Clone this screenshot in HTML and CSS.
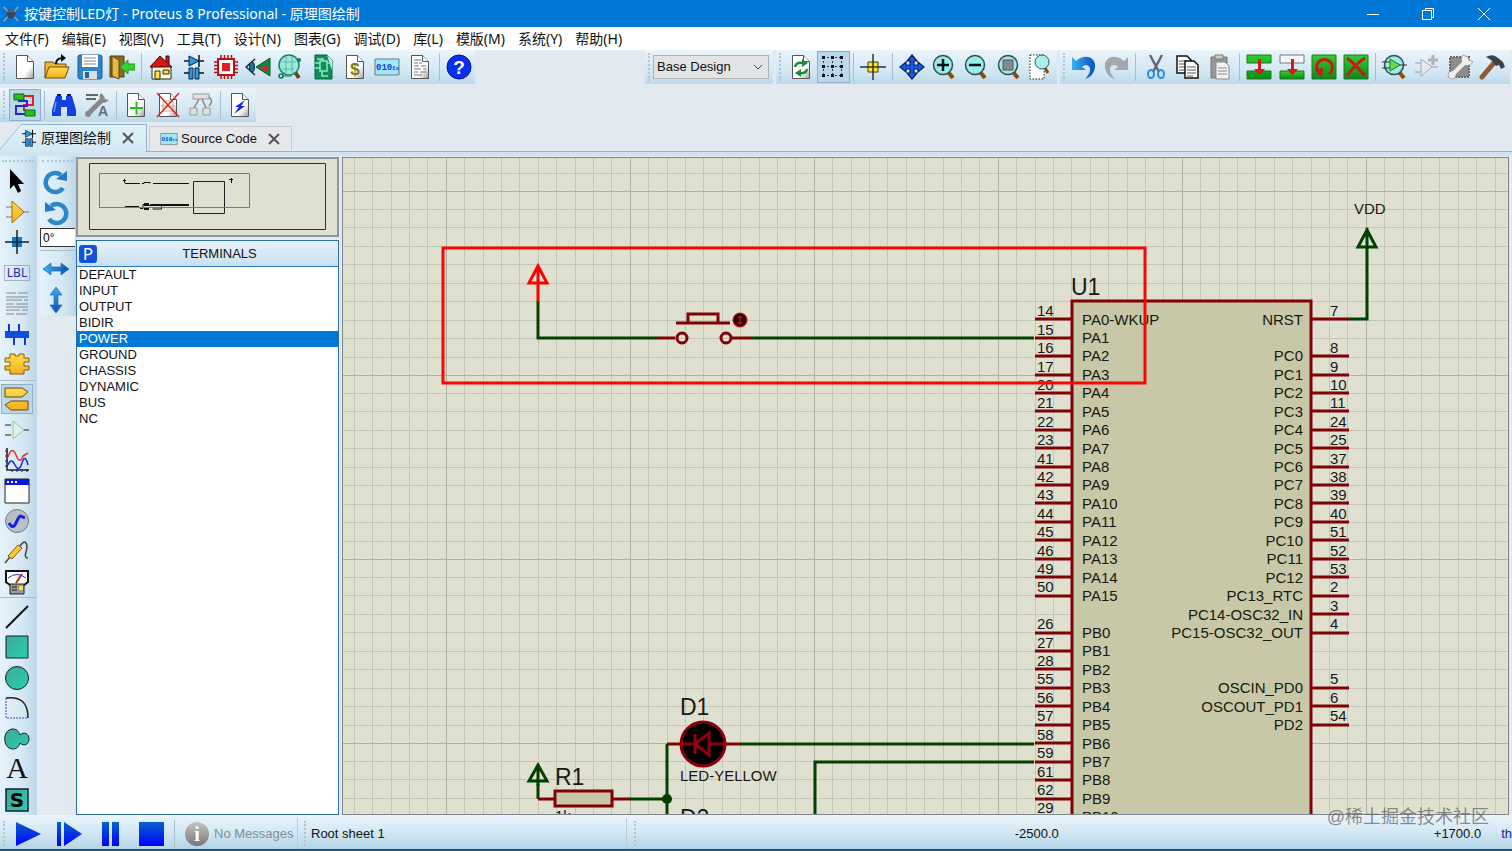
FILE: index.html
```html
<!DOCTYPE html>
<html lang="zh-CN">
<head>
<meta charset="utf-8">
<title>按键控制LED灯 - Proteus 8 Professional - 原理图绘制</title>
<link rel="stylesheet" href="styles.css">
</head>
<body>
<svg class="defs" aria-hidden="true">
  <defs>
    <linearGradient id="gPage" x1="0" y1="0" x2="1" y2="1"><stop offset=".65" stop-color="#fff"/><stop offset="1" stop-color="#999"/></linearGradient>
    <linearGradient id="gBlue" x1="0" y1="0" x2="0" y2="1"><stop offset="0" stop-color="#0a62c8"/><stop offset="1" stop-color="#0000ff"/></linearGradient>
    <linearGradient id="gUndo" x1="0" y1="0" x2="1" y2="0"><stop offset="0" stop-color="#3bb0f0"/><stop offset="1" stop-color="#0a4fc0"/></linearGradient>
    <linearGradient id="gGold" x1="0" y1="0" x2="0" y2="1"><stop offset="0" stop-color="#ffdc50"/><stop offset="1" stop-color="#f2ae20"/></linearGradient>
    <linearGradient id="gTeal" x1="0" y1="0" x2="1" y2="1"><stop offset="0" stop-color="#3fa896"/><stop offset="1" stop-color="#27d0b0"/></linearGradient>
    <linearGradient id="gGreen" x1="0" y1="0" x2="0" y2="1"><stop offset="0" stop-color="#2fd02f"/><stop offset="1" stop-color="#0a8a1a"/></linearGradient>
    <linearGradient id="gGray" x1="0" y1="0" x2="0" y2="1"><stop offset="0" stop-color="#c4c4c4"/><stop offset="1" stop-color="#777"/></linearGradient>
    <symbol id="page" viewBox="0 0 26 26"><path d="M4.500 1.500h11l6 6v17h-17z" fill="url(#gPage)" stroke="#555"/><path d="M15.500 1.500v6h6" fill="#fff" stroke="#555"/></symbol>
    <symbol id="schem" viewBox="0 0 26 26"><path d="M3 7h20M3 19h6M17 19h6M18 1v12M13 13v0" stroke="#111" stroke-width="1.500"/><path d="M8 2l10 5-10 5z" fill="#2a9be0" stroke="#102040"/><path d="M8 14h4v11H8zM14 14h4v11h-4z" fill="#2a9be0" stroke="#102040"/></symbol>
    <symbol id="code" viewBox="0 0 26 26"><path d="M1 5h24v16H1z" fill="#9fe8f8" stroke="#777"/><text x="2" y="16" class="glyph-code">010</text><text x="18" y="16" class="glyph-code-s">1s</text></symbol>
    <symbol id="lens" viewBox="0 0 26 26"><path d="M17 18l5 6" stroke="#8a4a10" stroke-width="4"/><circle cx="12" cy="11" r="9.500" fill="#98ecec" stroke="#3a4a50" stroke-width="1.500"/></symbol>
    <symbol id="lbl-x" viewBox="0 0 14 14"><path d="M2 2l10 10M12 2L2 12" stroke="#555" stroke-width="2"/></symbol>
    <symbol id="rot" viewBox="0 0 26 26"><path d="M20 19A9.500 9.500 0 1 1 18 6" fill="none" stroke="#2e88c8" stroke-width="4.500"/><path d="M24 2v10l-11-2z" fill="#2a78c0"/></symbol>
    <symbol id="arrows" viewBox="0 0 26 26"><path d="M0 13l8-6v4h10V7l8 6-8 6v-4H8v4z" fill="url(#gUndo)" stroke="#2468a8" stroke-width=".7"/></symbol>
  </defs>
</svg>

<header class="titlebar">
  <svg class="app-icon" viewBox="0 0 20 20" aria-hidden="true"><path d="M2 2l5 6M18 2l-5 6M2 18l5-6M18 18l-5-6" stroke="#a9a08c" stroke-width="1.500"/><circle cx="10" cy="10" r="5" fill="#354763"/><path d="M6 8q4-3 8 0" stroke="#c6653d" fill="none"/></svg>
  <h1>按键控制LED灯 - Proteus 8 Professional - 原理图绘制</h1>
  <button class="win" aria-label="最小化"><svg viewBox="0 0 14 14"><path d="M1 7.500h12" stroke="#fff"/></svg></button>
  <button class="win" aria-label="还原"><svg viewBox="0 0 14 14"><path d="M1.500 3.500h9v9h-9zM4.500 3V1.500h8v9H11" fill="none" stroke="#fff"/></svg></button>
  <button class="win" aria-label="关闭"><svg viewBox="0 0 14 14"><path d="M1 1l12 12M13 1L1 13" stroke="#fff"/></svg></button>
</header>

<nav class="menu">
  <button>文件(F)</button><button>编辑(E)</button><button>视图(V)</button><button>工具(T)</button><button>设计(N)</button><button>图表(G)</button><button>调试(D)</button><button>库(L)</button><button>模版(M)</button><button>系统(Y)</button><button>帮助(H)</button>
</nav>

<div class="bars">
  <div class="bar bar-file">
    <button aria-label="New"><svg viewBox="0 0 26 26"><use href="#page"/></svg></button>
    <button aria-label="Open"><svg viewBox="0 0 26 26"><path d="M1 24V8h8l2 2h11v4" fill="#f2b632" stroke="#6b4a00"/><path d="M1 24l4-11h20l-4 11z" fill="url(#gGold)" stroke="#6b4a00"/><path d="M12 10c0-5 3-6 7-6" fill="none" stroke="#111" stroke-width="2"/><path d="M17 0l5 4-5 4z" fill="#111"/></svg></button>
    <button aria-label="Save"><svg viewBox="0 0 26 26"><path d="M1 3q0-2 2-2h20q2 0 2 2v20q0 2-2 2H3q-2 0-2-2z" fill="#2c86c8" stroke="#1c5c94"/><path d="M5 1h16v12H5z" fill="#fff"/><path d="M7 4h12M7 7h12M7 10h12" stroke="#888"/><path d="M6 17h14v8H6z" fill="#ddd"/><path d="M8 18h4v6H8z" fill="#1b65a8"/></svg></button>
    <button aria-label="Close project"><svg viewBox="0 0 26 26"><path d="M1 2h14v21H1z" fill="#8a6a20" stroke="#5a4310"/><path d="M3 2l7 4v19l-7-3z" fill="#e9b840" stroke="#5a4310"/><path d="M11 13l8-7v4h7v6h-7v4z" fill="#35d135" stroke="#1c9c1c"/></svg></button>
    <span class="sep"></span>
    <button aria-label="Home"><svg viewBox="0 0 26 26"><path d="M18 2h3v8h-3z" fill="#d01818" stroke="#400"/><path d="M4 12h19v13H4z" fill="#ffffd8" stroke="#222"/><path d="M2 13L12 2l12 11z" fill="#d01818" stroke="#500"/><path d="M7 17h5v8H7z" fill="#ffe040" stroke="#222"/><path d="M15 16h6v4h-6z" fill="#ffe040" stroke="#222"/></svg></button>
    <button aria-label="Schematic Capture"><svg viewBox="0 0 26 26"><use href="#schem"/></svg></button>
    <button aria-label="PCB Layout"><svg viewBox="0 0 26 26"><path d="M8 1v24M11.500 1v24M15 1v24M18.500 1v24M1 8h24M1 11.500h24M1 15h24M1 18.500h24" stroke="#c01010" stroke-width="1.500"/><path d="M5 5h16v16H5z" fill="#fff" stroke="#c01010" stroke-width="2"/><path d="M9 9h8v8H9z" fill="#e02020"/></svg></button>
    <button aria-label="3D Visualizer"><svg viewBox="0 0 26 26"><path d="M10 5L1 13l9 8" fill="none" stroke="#222" stroke-width="1.500"/><ellipse cx="7" cy="13" rx="2.500" ry="5" fill="#1878a0" stroke="#123"/><path d="M11 13l14-9v18z" fill="#0f8840" stroke="#0a5a28"/><path d="M14 14l9-3v7z" fill="#d8232a"/></svg></button>
    <button aria-label="Gerber Viewer"><svg viewBox="0 0 26 26"><circle cx="4" cy="22" r="2" fill="none" stroke="#0c7b50" stroke-width="1.500"/><path d="M6 22h9" stroke="#0c7b50"/><path d="M18 18l4 6" stroke="#704010" stroke-width="4"/><circle cx="12" cy="11" r="10" fill="#9be8dc" stroke="#267a68" stroke-width="1.500"/><path d="M5 8h14M5 15h12M9 3v16M15 3v16" stroke="#58b8a8"/><circle cx="22" cy="6" r="2" fill="#0c7b50"/></svg></button>
    <button aria-label="Design Explorer"><svg viewBox="0 0 26 26"><path d="M5 1h12l5 5v19H5z" fill="#0e8f5c" stroke="#0a5c3c"/><path d="M17 1l5 5v10z" fill="#dfeee8"/><path d="M10 7h7v10h-7zM5 9h5M5 14h5M17 9h4M12 17v5h6M7 5h6v2" stroke="#8fe8c0" stroke-width="1.500" fill="none"/></svg></button>
    <button aria-label="Bill of Materials"><svg viewBox="0 0 26 26"><use href="#page"/><text x="13" y="21" class="glyph-dollar">$</text></svg></button>
    <button aria-label="Source Code"><svg viewBox="0 0 26 26"><use href="#code"/></svg></button>
    <button aria-label="Project Notes"><svg viewBox="0 0 26 26"><use href="#page"/><path d="M7 6h7M7 9h4M12 9h3M7 12h5M14 12h5M7 15h7M16 15h3M7 18h4M13 18h6M7 21h8" stroke="#777"/></svg></button>
    <span class="sep"></span>
    <button aria-label="Help"><svg viewBox="0 0 26 26"><circle cx="13" cy="13" r="12" fill="#0a2ff0" stroke="#0018a0"/><text x="13" y="20" class="glyph-help">?</text></svg></button>
  </div>

  <div class="bar bar-variant">
    <label class="variant"><select aria-label="Design variant"><option>Base Design</option></select><svg viewBox="0 0 10 10" aria-hidden="true"><path d="M1 3l4 4 4-4" fill="none" stroke="#444"/></svg></label>
  </div>

  <div class="bar bar-view">
    <button aria-label="Redraw"><svg viewBox="0 0 26 26"><use href="#page"/><path d="M7 13q1-5 8-4" fill="none" stroke="#1c8a38" stroke-width="2.500"/><path d="M14 5l6 4-6 4z" fill="#1c8a38"/><path d="M19 15q-1 5-7 4" fill="none" stroke="#1c8a38" stroke-width="2.500"/><path d="M13 15l-6 4 6 4z" fill="#1c8a38"/></svg></button>
    <button class="on" aria-label="Grid"><svg viewBox="0 0 26 26"><path d="M3 3.500h20M3 12.500h20M3 21.500h20M3.500 3v20M12.500 3v20M21.500 3v20" stroke="#334" stroke-dasharray="2 2"/><path d="M2 2h3v3H2zM11 2h3v3h-3zM20 2h3v3h-3zM2 11h3v3H2zM11 11h3v3h-3zM20 11h3v3h-3zM2 20h3v3H2zM11 20h3v3h-3zM20 20h3v3h-3z" fill="#112"/></svg></button>
    <span class="sep"></span>
    <button aria-label="Origin"><svg viewBox="0 0 26 26"><path d="M8 8h10v10H8z" fill="#ffe818" stroke="#443c00"/><path d="M0 13h26M13 0v26" stroke="#333" stroke-width="1.500"/></svg></button>
    <span class="sep"></span>
    <button aria-label="Pan"><svg viewBox="0 0 26 26"><path d="M13 1l5 6h-3v4h4V8l6 5-6 5v-3h-4v4h3l-5 6-5-6h3v-4H7v3l-6-5 6-5v3h4V7H8z" fill="#1858e8" stroke="#0a1c60" stroke-width="1.200"/></svg></button>
    <button aria-label="Zoom in"><svg viewBox="0 0 26 26"><use href="#lens"/><path d="M6 11h12M12 5v12" stroke="#111" stroke-width="2.500"/></svg></button>
    <button aria-label="Zoom out"><svg viewBox="0 0 26 26"><use href="#lens"/><path d="M6 11h12" stroke="#111" stroke-width="2.500"/></svg></button>
    <button aria-label="Zoom all"><svg viewBox="0 0 26 26"><use href="#lens"/><path d="M7 6h10v10H7z" fill="#888" stroke="#555"/></svg></button>
    <button aria-label="Zoom area"><svg viewBox="0 0 26 26"><path d="M2 1h14v24H2z" fill="#fff" stroke="#222" stroke-dasharray="1.500 1.500"/><path d="M17 14l3 5" stroke="#8a4a10" stroke-width="3"/><circle cx="14" cy="8" r="7" fill="#a8f0ec" stroke="#3a5a60"/></svg></button>
  </div>

  <div class="bar bar-edit">
    <button aria-label="Undo"><svg viewBox="0 0 26 26"><path d="M1 3l4 4c9-8 20-4 19 6-1 8-6 11-10 12 6-6 7-13 1-14-2 0-3 1-4 2l4 3H1z" fill="url(#gUndo)"/></svg></button>
    <button aria-label="Redo"><svg viewBox="0 0 26 26"><path d="M25 3l-4 4C12-1 1 3 2 13c1 8 6 11 10 12-6-6-7-13-1-14 2 0 3 1 4 2l-4 3h14z" fill="#a4a8ac"/></svg></button>
    <span class="sep"></span>
    <button aria-label="Cut"><svg viewBox="0 0 26 26"><path d="M7 1l9 17M19 1l-9 17" stroke="#667" stroke-width="2.500"/><ellipse cx="8" cy="20" rx="3" ry="4" fill="none" stroke="#2a8be0" stroke-width="2"/><ellipse cx="18" cy="20" rx="3" ry="4" fill="none" stroke="#2a8be0" stroke-width="2"/></svg></button>
    <button aria-label="Copy"><svg viewBox="0 0 26 26"><path d="M2 2h10l4 4v13H2z" fill="#fff" stroke="#111" stroke-width="1.500"/><path d="M4 7h8M4 10h8M4 13h8M4 16h6" stroke="#555"/><path d="M10 7h9l4 4v13H10z" fill="#fff" stroke="#111" stroke-width="1.500"/><path d="M12 13h9M12 16h9M12 19h9M12 22h6" stroke="#555"/></svg></button>
    <button aria-label="Paste"><svg viewBox="0 0 26 26"><path d="M4 3h16v21H4z" fill="#999" stroke="#777"/><path d="M8 1h8v4H8z" fill="#ccc" stroke="#777"/><path d="M9 8h9l4 4v13H9z" fill="#f2f2f2" stroke="#888"/><path d="M11 14h9M11 17h9M11 20h9" stroke="#888"/></svg></button>
    <span class="sep"></span>
    <button aria-label="Block copy"><svg viewBox="0 0 26 26"><path d="M1 1h24v8H1zM1 17h24v8H1z" fill="url(#gGreen)" stroke="#197819"/><path d="M12 5h3v10h4l-5.500 6L8 15h4z" fill="#d81818"/></svg></button>
    <button aria-label="Block move"><svg viewBox="0 0 26 26"><path d="M1 1h24v8H1z" fill="#eef6fb" stroke="#777"/><path d="M1 17h24v8H1z" fill="url(#gGreen)" stroke="#197819"/><path d="M12 5h3v10h4l-5.500 6L8 15h4z" fill="#d81818"/></svg></button>
    <button aria-label="Block rotate"><svg viewBox="0 0 26 26"><path d="M1 1h24v24H1z" fill="url(#gGreen)" stroke="#197819"/><path d="M9 20A8 8 0 1 1 18 20" fill="none" stroke="#c81818" stroke-width="3"/><path d="M3 15l9-1-1 9z" fill="#c81818"/></svg></button>
    <button aria-label="Block delete"><svg viewBox="0 0 26 26"><path d="M1 1h24v24H1z" fill="url(#gGreen)" stroke="#197819"/><path d="M4 4q8 6 18 18M22 4Q12 10 4 22" fill="none" stroke="#c81818" stroke-width="3"/></svg></button>
    <span class="sep"></span>
    <button aria-label="Pick parts"><svg viewBox="0 0 26 26"><use href="#lens"/><path d="M0 8h8M0 14h8M17 11h8" stroke="#333"/><path d="M8 5l10 6-10 6z" fill="#6ed848" stroke="#277a20"/></svg></button>
    <button aria-label="Make device"><svg viewBox="0 0 26 26"><path d="M1 9h6M1 18h6M17 13h7" stroke="#999"/><path d="M7 5l11 8-11 9z" fill="#e4e8ea" stroke="#a8acb0"/><path d="M19 1v10M14 6h10" stroke="#b0b4b8" stroke-width="3"/></svg></button>
    <button aria-label="Packaging tool"><svg viewBox="0 0 26 26"><path d="M3 3h19v20H3z" fill="#8c8c8c" stroke="#666" stroke-width="2" stroke-dasharray="2 1"/><path d="M5 21L18 8" stroke="#888" stroke-width="6"/><path d="M16 1q-4 5 1 9t9-2l-4-2-1-3z" fill="#eee" stroke="#888" stroke-width=".7"/><circle cx="5" cy="21" r="4" fill="#eee" stroke="#888" stroke-width=".7"/><path d="M5 21L18 8" stroke="#eee" stroke-width="4.500"/></svg></button>
    <button aria-label="Decompose"><svg viewBox="0 0 26 26"><path d="M3 23L14 10" stroke="#8b5a35" stroke-width="5" stroke-linecap="round"/><path d="M7 3q7-4 12 1l5 4 2 5-4 2-2-4-3 1-5-6z" fill="#3c4248"/></svg></button>
  </div>
</div>

<div class="bars bars-second">
  <div class="bar bar-wire">
    <button class="on" aria-label="Wire autorouter"><svg viewBox="0 0 26 26"><path d="M12 4h9v9h-9v5h2" fill="none" stroke="#e02020" stroke-width="2"/><path d="M14 22H4v-8h11V9H7V7" fill="none" stroke="#2028e0" stroke-width="2"/><path d="M2 2h10v6H2zM13 18h10v6H13z" fill="#22c022" stroke="#0a6a0a"/></svg></button>
    <span class="sep"></span>
    <button aria-label="Search and tag"><svg viewBox="0 0 26 26"><path d="M5 4h6v4h4V4h6l4 14v6h-9v-9h-6v9H1v-6z" fill="#1440e0"/><path d="M6 3h4M16 3h4" stroke="#0a1c80" stroke-width="2"/><path d="M5 10L3 20" stroke="#5a9af8" stroke-width="1.500"/></svg></button>
    <button aria-label="Property assignment"><svg viewBox="0 0 26 26"><path d="M2 3h12M2 7h10" stroke="#666" stroke-width="2"/><path d="M4 22L19 7" stroke="#888" stroke-width="5"/><path d="M17 1q-3 4 0 8t8-1l-4-1-1-3z" fill="#888"/><circle cx="4" cy="22" r="3" fill="#888"/><text x="14" y="24" class="glyph-a">A</text></svg></button>
    <span class="sep"></span>
    <button aria-label="New sheet"><svg viewBox="0 0 26 26"><use href="#page"/><path d="M7 16h13M13.500 9.500v13" stroke="#20c020" stroke-width="2"/></svg></button>
    <button aria-label="Remove sheet"><svg viewBox="0 0 26 26"><use href="#page"/><path d="M8 9h10v10H8zM6 14h14" fill="none" stroke="#c9a27f"/><path d="M2 1l22 24M24 1L2 25" stroke="#e02020" stroke-width="1.500"/></svg></button>
    <button aria-label="Exit to parent"><svg viewBox="0 0 26 26"><path d="M5 2h16v5H5zM2 16h7v7H2zM15 16h7v7h-7z" fill="#e0e0e0" stroke="#999"/><path d="M6 16l5-9M18 16l-4-9M21 5q5 4 0 9" fill="none" stroke="#888" stroke-width="1.500"/></svg></button>
    <span class="sep"></span>
    <button aria-label="Electrical check"><svg viewBox="0 0 26 26"><use href="#page"/><path d="M18 8l-10 7h4l-5 7 11-8h-4z" fill="#1020f0"/></svg></button>
  </div>
</div>

<div class="tabs">
  <div class="tab tab-active"><button class="tab-label"><svg viewBox="0 0 26 26" aria-hidden="true"><use href="#schem"/></svg>原理图绘制</button><button class="tab-x" aria-label="关闭原理图绘制"><svg viewBox="0 0 14 14"><use href="#lbl-x"/></svg></button></div>
  <div class="tab"><button class="tab-label"><svg viewBox="0 0 26 26" aria-hidden="true"><use href="#code"/></svg>Source Code</button><button class="tab-x" aria-label="关闭Source Code"><svg viewBox="0 0 14 14"><use href="#lbl-x"/></svg></button></div>
</div>

<main class="work">
  <div class="modes">
    <button aria-label="Selection"><svg viewBox="0 0 26 26"><path d="M6 1v20l4-4 4 8 3-2-3-7h6z" fill="#000"/></svg></button>
    <button aria-label="Component"><svg viewBox="0 0 26 26"><path d="M2 8h7M2 18h7M19 13h6" stroke="#777"/><path d="M8 2l12 11L8 24z" fill="url(#gGold)" stroke="#a06c00"/></svg></button>
    <button aria-label="Junction"><svg viewBox="0 0 26 26"><path d="M8 8h10v10H8z" fill="#1a78c8"/><path d="M1 13h24M13 1v24" stroke="#123" stroke-width="1.500"/></svg></button>
    <button aria-label="Wire label"><svg viewBox="0 0 26 26"><path d="M.5 5.500h25v15H.5z" fill="none" stroke="#778" stroke-dasharray="1 1"/><text x="13" y="17" class="glyph-lbl">LBL</text></svg></button>
    <button aria-label="Text script"><svg viewBox="0 0 26 26"><path d="M2 3h10M14 3h10M2 7h22M2 10h16M20 10h4M2 14h8M12 14h12M2 17h22M2 20h14M18 20h6M2 24h8M12 24h11" stroke="#888"/></svg></button>
    <button aria-label="Bus"><svg viewBox="0 0 26 26"><path d="M1 10h24v7H1z" fill="#1050e0"/><path d="M5 3v8M15 3v8M10 16v8M21 16v8" stroke="#1438d0" stroke-width="2"/></svg></button>
    <button aria-label="Subcircuit"><svg viewBox="0 0 26 26"><path d="M6 3h5v2h4V3h5v4h5v4h-5v4h5v4h-5v4H6v-4H1v-4h5v-4H1V7h5z" fill="url(#gGold)" stroke="#8a5c00"/></svg></button>
    <span class="sep"></span>
    <button class="on" aria-label="Terminals"><svg viewBox="0 0 26 26"><path d="M1 2h17l6 4-6 5H1zM24 15H7l-6 4 6 5h17z" fill="url(#gGold)" stroke="#6a4a00"/></svg></button>
    <button aria-label="Device pins"><svg viewBox="0 0 26 26"><path d="M1 8h6M1 18h6M20 13h5" stroke="#222"/><path d="M9 4l11 9-11 9z" fill="#def0e8" stroke="#8aca98"/></svg></button>
    <button aria-label="Graph"><svg viewBox="0 0 26 26"><path d="M3 1v22h22" fill="none" stroke="#222" stroke-width="1.500"/><path d="M1 4h3M1 9h3M1 14h3M1 19h3M8 22v3M13 22v3M18 22v3M23 22v3" stroke="#222"/><path d="M4 10q4-12 8-2t7 1l5-3" fill="none" stroke="#e03030" stroke-width="1.500"/><path d="M4 18q3-8 7 0t7-2 6 2" fill="none" stroke="#1828e0" stroke-width="1.500"/></svg></button>
    <button aria-label="Active popup"><svg viewBox="0 0 26 26"><path d="M1 1h24v24H1z" fill="#fff" stroke="#222"/><path d="M1 1h24v6H1z" fill="#0818d8"/><path d="M3 3h2v2H3zM7 3h2v2H7zM11 3h2v2h-2z" fill="#fff"/></svg></button>
    <button aria-label="Generator"><svg viewBox="0 0 26 26"><circle cx="13" cy="13" r="11.500" fill="#b8c0c8" stroke="#777"/><path d="M5 15q4 7 7 0t4-7 5 2" fill="none" stroke="#1020e8" stroke-width="3"/></svg></button>
    <button aria-label="Probe"><svg viewBox="0 0 26 26"><path d="M1 24l5-6" stroke="#444" stroke-width="1.500"/><path d="M4 17L14 6l4 3L8 20z" fill="#f8c838" stroke="#7a5a10"/><path d="M16 7q4-6 6-3t0 9 2 6" fill="none" stroke="#444" stroke-width="1.500"/></svg></button>
    <button aria-label="Instruments"><svg viewBox="0 0 26 26"><path d="M2 2h22v11l-4 3H6l-4-3z" fill="#fff" stroke="#111" stroke-width="2"/><path d="M4 9q9-7 18 0" fill="none" stroke="#2030d0"/><path d="M12 14l6-9" stroke="#d02020" stroke-width="2"/><path d="M6 15h14v10H6z" fill="#999" stroke="#222"/><path d="M15 17h4v4h-4z" fill="#ffe040"/><path d="M8 18h5M8 21h5" stroke="#222"/></svg></button>
    <span class="sep"></span>
    <button aria-label="Line"><svg viewBox="0 0 26 26"><path d="M2 24L24 2" stroke="#111" stroke-width="2"/></svg></button>
    <button aria-label="Box"><svg viewBox="0 0 26 26"><path d="M2 2h22v22H2z" fill="url(#gTeal)" stroke="#123"/></svg></button>
    <button aria-label="Circle"><svg viewBox="0 0 26 26"><circle cx="13" cy="13" r="11.500" fill="url(#gTeal)" stroke="#123"/></svg></button>
    <button aria-label="Arc"><svg viewBox="0 0 26 26"><path d="M2 3v20h22" fill="none" stroke="#4848c8" stroke-dasharray="2 1"/><path d="M2 3q22-3 22 20" fill="none" stroke="#222" stroke-width="1.500"/></svg></button>
    <button aria-label="Path"><svg viewBox="0 0 26 26"><path d="M9 3c5 0 6 4 7 6 4-4 9-1 9 4s-5 8-9 4c-1 3-3 6-7 6-11 0-11-20 0-20z" fill="url(#gTeal)" stroke="#123"/></svg></button>
    <button aria-label="Text"><svg viewBox="0 0 26 26"><text x="13" y="22" class="glyph-text">A</text></svg></button>
    <button aria-label="Symbol"><svg viewBox="0 0 26 26"><path d="M2 2h22v22H2z" fill="url(#gTeal)" stroke="#123" stroke-width="1.500"/><text x="13" y="20" class="glyph-s">S</text></svg></button>
  </div>

  <div class="orient">
    <button aria-label="Rotate clockwise"><svg viewBox="0 0 26 26"><use href="#rot"/></svg></button>
    <button aria-label="Rotate anti-clockwise"><svg viewBox="0 0 26 26"><g transform="matrix(-1 0 0 1 26 0)"><use href="#rot"/></g></svg></button>
    <input type="text" value="0°" aria-label="Rotation angle">
    <span class="sep"></span>
    <button aria-label="Mirror horizontally"><svg viewBox="0 0 26 26"><use href="#arrows"/></svg></button>
    <button aria-label="Mirror vertically"><svg viewBox="0 0 26 26"><g transform="rotate(90 13 13)"><use href="#arrows"/></g></svg></button>
  </div>

  <aside class="side">
    <div class="overview">
      <svg viewBox="0 0 259 76" aria-label="Sheet overview">
        <path d="M11.500 4.500h236v66h-236z" fill="none" stroke="#2a1ca8"/>
        <path d="M115.500 22.500h31v32h-31z" fill="none" stroke="#222"/>
        <path d="M47 24.500h15M64 24.500h2v-1h6v1M75 24.500h36M46.500 20v4M45 21.500h3M47 47.500h14M62 49.500h3v-4h6M71 46.500h40M83.500 46v4h-9M153.500 19v5M151 20.500h4" fill="none" stroke="#111"/>
        <path d="M66 44h5v3h-5zM66 49h5v2h-5zM72 45h39v2H72z" fill="#111"/>
        <path d="M21.500 14.500h150v34h-150z" fill="none" stroke="#28b428"/>
      </svg>
    </div>
    <section class="picker">
      <header><button class="pick" aria-label="Pick">P</button><h2>TERMINALS</h2></header>
      <ul>
        <li><button>DEFAULT</button></li><li><button>INPUT</button></li><li><button>OUTPUT</button></li><li><button>BIDIR</button></li><li><button class="sel">POWER</button></li><li><button>GROUND</button></li><li><button>CHASSIS</button></li><li><button>DYNAMIC</button></li><li><button>BUS</button></li><li><button>NC</button></li>
      </ul>
    </section>
  </aside>

  <div class="sheet">
    <svg class="drawing" aria-label="Schematic">
      <defs>
        <pattern id="grid" patternUnits="userSpaceOnUse" x="446" y="191" width="184" height="184">
          <path class="g-minor" d="M18.500 0v184M37.500 0v184M55.500 0v184M73.500 0v184M92.500 0v184M110.500 0v184M129.500 0v184M147.500 0v184M165.500 0v184M0 18.500h184M0 36.500h184M0 55.500h184M0 73.500h184M0 92.500h184M0 110.500h184M0 129.500h184M0 147.500h184M0 166.500h184"/>
          <path class="g-major" d="M.5 0v184M0 .5h184"/>
        </pattern>
      </defs>
      <g transform="translate(-343 -158)">
        <rect x="343" y="158" width="4000" height="3000" fill="url(#grid)"/>
        <path class="wire" d="M538 301v37h120M751 338h283M1349 319h18v-70M742 744h292M815 1000V762h219M667 1000V744M667 799h-37M538 799v-15"/>
        <path class="wire" d="M1367 228v21M1367 230l-9 17h18zM538 764v22M538 765l-9 16h18z"/>
        <circle cx="667" cy="799" r="5" fill="#004000"/>
        <path class="live" d="M538 266v36M538 266l-9 17h18z"/>
        <path class="part" d="M658 338h17M732 338h19M676 323h54M688 323v-9h30v9"/>
        <circle class="part" cx="682" cy="338" r="5"/><circle class="part" cx="726" cy="338" r="5"/>
        <circle cx="740" cy="320" r="7" fill="#300" stroke="#e00000"/><path d="M740 316v8M738 318l2-2 2 2M738 322l2 2 2-2" fill="none" stroke="#f02020"/>
        <path class="part" d="M667 744h14M727 744h15M538 799h17M612 799h18"/>
        <circle cx="703" cy="744" r="22" fill="#000" stroke="#8c0008" stroke-width="3"/>
        <path class="led" d="M681 744h14M709 744h18M695 734v20M695 744l14-11v22z"/>
        <rect class="part body" x="555" y="791" width="57" height="15"/>
        <rect class="part body" x="1072" y="301" width="239" height="900"/>
        <path class="part" d="M1035 319h37M1035 338h37M1035 356h37M1035 375h37M1035 393h37M1035 411h37M1035 430h37M1035 448h37M1035 467h37M1035 485h37M1035 503h37M1035 522h37M1035 540h37M1035 559h37M1035 577h37M1035 596h37M1035 633h37M1035 651h37M1035 669h37M1035 688h37M1035 706h37M1035 725h37M1035 743h37M1035 762h37M1035 780h37M1035 799h37M1035 817h37"/>
        <path class="part" d="M1311 319h38M1311 356h38M1311 375h38M1311 393h38M1311 411h38M1311 430h38M1311 448h38M1311 467h38M1311 485h38M1311 503h38M1311 522h38M1311 540h38M1311 559h38M1311 577h38M1311 596h38M1311 614h38M1311 633h38M1311 688h38M1311 706h38M1311 725h38"/>
        <text class="pin"><tspan x="1037" y="316">14</tspan><tspan x="1037" y="335">15</tspan><tspan x="1037" y="353">16</tspan><tspan x="1037" y="372">17</tspan><tspan x="1037" y="390">20</tspan><tspan x="1037" y="408">21</tspan><tspan x="1037" y="427">22</tspan><tspan x="1037" y="445">23</tspan><tspan x="1037" y="464">41</tspan><tspan x="1037" y="482">42</tspan><tspan x="1037" y="500">43</tspan><tspan x="1037" y="519">44</tspan><tspan x="1037" y="537">45</tspan><tspan x="1037" y="556">46</tspan><tspan x="1037" y="574">49</tspan><tspan x="1037" y="592">50</tspan><tspan x="1037" y="629">26</tspan><tspan x="1037" y="648">27</tspan><tspan x="1037" y="666">28</tspan><tspan x="1037" y="684">55</tspan><tspan x="1037" y="703">56</tspan><tspan x="1037" y="721">57</tspan><tspan x="1037" y="740">58</tspan><tspan x="1037" y="758">59</tspan><tspan x="1037" y="777">61</tspan><tspan x="1037" y="795">62</tspan><tspan x="1037" y="813">29</tspan></text>
        <text class="pin"><tspan x="1082" y="325">PA0-WKUP</tspan><tspan x="1082" y="343">PA1</tspan><tspan x="1082" y="361">PA2</tspan><tspan x="1082" y="380">PA3</tspan><tspan x="1082" y="398">PA4</tspan><tspan x="1082" y="417">PA5</tspan><tspan x="1082" y="435">PA6</tspan><tspan x="1082" y="454">PA7</tspan><tspan x="1082" y="472">PA8</tspan><tspan x="1082" y="490">PA9</tspan><tspan x="1082" y="509">PA10</tspan><tspan x="1082" y="527">PA11</tspan><tspan x="1082" y="546">PA12</tspan><tspan x="1082" y="564">PA13</tspan><tspan x="1082" y="583">PA14</tspan><tspan x="1082" y="601">PA15</tspan><tspan x="1082" y="638">PB0</tspan><tspan x="1082" y="656">PB1</tspan><tspan x="1082" y="675">PB2</tspan><tspan x="1082" y="693">PB3</tspan><tspan x="1082" y="712">PB4</tspan><tspan x="1082" y="730">PB5</tspan><tspan x="1082" y="749">PB6</tspan><tspan x="1082" y="767">PB7</tspan><tspan x="1082" y="785">PB8</tspan><tspan x="1082" y="804">PB9</tspan><tspan x="1082" y="822">PB10</tspan></text>
        <text class="pin end"><tspan x="1303" y="325">NRST</tspan><tspan x="1303" y="361">PC0</tspan><tspan x="1303" y="380">PC1</tspan><tspan x="1303" y="398">PC2</tspan><tspan x="1303" y="417">PC3</tspan><tspan x="1303" y="435">PC4</tspan><tspan x="1303" y="454">PC5</tspan><tspan x="1303" y="472">PC6</tspan><tspan x="1303" y="490">PC7</tspan><tspan x="1303" y="509">PC8</tspan><tspan x="1303" y="527">PC9</tspan><tspan x="1303" y="546">PC10</tspan><tspan x="1303" y="564">PC11</tspan><tspan x="1303" y="583">PC12</tspan><tspan x="1303" y="601">PC13_RTC</tspan><tspan x="1303" y="620">PC14-OSC32_IN</tspan><tspan x="1303" y="638">PC15-OSC32_OUT</tspan><tspan x="1303" y="693">OSCIN_PD0</tspan><tspan x="1303" y="712">OSCOUT_PD1</tspan><tspan x="1303" y="730">PD2</tspan></text>
        <text class="pin"><tspan x="1330" y="316">7</tspan><tspan x="1330" y="353">8</tspan><tspan x="1330" y="372">9</tspan><tspan x="1330" y="390">10</tspan><tspan x="1330" y="408">11</tspan><tspan x="1330" y="427">24</tspan><tspan x="1330" y="445">25</tspan><tspan x="1330" y="464">37</tspan><tspan x="1330" y="482">38</tspan><tspan x="1330" y="500">39</tspan><tspan x="1330" y="519">40</tspan><tspan x="1330" y="537">51</tspan><tspan x="1330" y="556">52</tspan><tspan x="1330" y="574">53</tspan><tspan x="1330" y="592">2</tspan><tspan x="1330" y="611">3</tspan><tspan x="1330" y="629">4</tspan><tspan x="1330" y="684">5</tspan><tspan x="1330" y="703">6</tspan><tspan x="1330" y="721">54</tspan></text>
        <text class="pin" x="1354" y="214">VDD</text>
        <text class="pin" x="680" y="781">LED-YELLOW</text>
        <text class="pin" x="555" y="821">1k</text>
        <text class="ref" x="1071" y="295">U1</text>
        <text class="ref" x="680" y="715">D1</text>
        <text class="ref" x="555" y="785">R1</text>
        <text class="ref" x="680" y="826">D2</text>
        <rect class="mark" x="443" y="248" width="702" height="135"/>
      </g>
    </svg>
  </div>
</main>

<footer class="status">
  <div class="sim">
    <button aria-label="Play"><svg viewBox="0 0 26 26"><path d="M1 1l25 12L1 25z" fill="url(#gBlue)"/></svg></button>
    <button aria-label="Step"><svg viewBox="0 0 26 26"><path d="M1 1h4v24H1zM8 1l18 12L8 25z" fill="url(#gBlue)"/></svg></button>
    <button aria-label="Pause"><svg viewBox="0 0 26 26"><path d="M5 1h7v24H5zM15 1h7v24h-7z" fill="url(#gBlue)"/></svg></button>
    <button aria-label="Stop"><svg viewBox="0 0 26 26"><path d="M1 1h25v24H1z" fill="url(#gBlue)"/></svg></button>
    <span class="sep"></span>
    <button class="msgs"><svg viewBox="0 0 26 26" aria-hidden="true"><circle cx="13" cy="13" r="12" fill="url(#gGray)"/><text x="13" y="20" class="glyph-i">i</text></svg>No Messages</button>
  </div>
  <div class="root">Root sheet 1</div>
  <div class="coords"><span class="cx">-2500.0</span><span class="cy">+1700.0</span><span class="unit">th</span></div>
  <p class="watermark">@稀土掘金技术社区</p>
</footer>
</body>
</html>
```

FILE: styles.css
```css
* { box-sizing: border-box; }

body {
  margin: 0;
  height: 100vh;
  display: flex;
  flex-direction: column;
  overflow: hidden;
  background: #e3e9f0;
  color: #111;
  font: 13px/16px "Liberation Sans", "Noto Sans CJK SC", sans-serif;
}

button {
  border: 0;
  padding: 0;
  background: none;
  color: inherit;
  font: inherit;
}

h1, h2, ul, p { margin: 0; padding: 0; font: inherit; }
svg { display: block; }
.defs { position: absolute; width: 0; height: 0; }

/* Title and menu */
.titlebar {
  display: flex;
  align-items: center;
  flex: none;
  height: 27px;
  padding-left: 2px;
  background: #0078d7;
  color: #fff;
  font: 14px/20px "Noto Sans", "Noto Sans CJK SC", sans-serif;
}
.app-icon { width: 18px; height: 20px; margin-right: 4px; }
.titlebar h1 { flex: 1; }
.win { display: grid; place-items: center; width: 55px; height: 27px; }
.win:last-child { width: 57px; }
.win svg { width: 14px; height: 14px; }

.menu {
  display: flex;
  flex: none;
  gap: 13px;
  height: 23px;
  padding-left: 5px;
  background: #fff;
  font: 14px/22px "Noto Sans", "Noto Sans CJK SC", sans-serif;
}

/* Toolbars */
.bars {
  display: flex;
  flex: none;
  gap: 3px;
  height: 38px;
  padding-right: 2px;
}
.bar {
  position: relative;
  display: flex;
  align-items: center;
  height: 34px;
  padding-left: 9px;
  background: linear-gradient(#eaf4fb, #cfe5f2 70%, #bcd8e7);
}
.bar::before, .sim::before, .root::before, .coords::before {
  content: "";
  position: absolute;
  left: 3px;
  top: 3px;
  bottom: 3px;
  border-left: 2px dotted #b0c4d2;
}
.bar button { flex: 1 1 0; height: 32px; display: grid; place-items: center; }
.bar svg { width: 26px; height: 26px; }
.bar .on, .modes .on { background: #bcd6ea; box-shadow: inset 0 0 0 1px #8fb0c8; }
.bar .sep { flex: none; width: 7px; height: 28px; border-left: 1px solid #a9bfcd; margin-left: 3px; margin-right: -3px; }
.bar-file { width: 475px; }
.bar-variant { width: 128px; margin-left: auto; padding-left: 8px; }
.bar-view { width: 281px; }
.bar-edit { width: 450px; padding-left: 8px; padding-right: 2px; }
.bars-second { height: 36px; }
.bar-wire { width: 256px; }

.variant { display: grid; align-items: center; width: 116px; }
.variant select {
  grid-area: 1 / 1;
  appearance: none;
  height: 24px;
  padding: 0 3px;
  border: 1px solid #adb2b5;
  border-radius: 0;
  background: #e1e3e4;
  color: #111;
  font: inherit;
}
.bar .variant svg { grid-area: 1 / 1; justify-self: end; width: 10px; height: 10px; margin-right: 6px; pointer-events: none; }

/* Document tabs */
.tabs {
  display: flex;
  align-items: flex-end;
  flex: none;
  height: 32px;
  border-bottom: 4px solid #cfe4f0;
  box-shadow: inset 0 -1px #8fb5cb;
}
.tab {
  display: flex;
  align-items: center;
  gap: 10px;
  width: 143px;
  height: 26px;
  margin-left: 2px;
  padding-left: 10px;
  border: 1px solid #c8ccd0;
  border-bottom-color: #8fb5cb;
  background: #e6e7ea;
}
.tab-active {
  position: relative;
  width: 147px;
  height: 28px;
  margin-left: 0;
  padding-left: 20px;
  border: 0;
  background: #8fb5cb;
  clip-path: polygon(0 25px, 21px 0, 100% 0, 100% 100%, 0 100%);
}
.tab-active::before {
  content: "";
  position: absolute;
  inset: 1px 1px 0 0;
  background: linear-gradient(#e2f0f9, #d2e7f3);
  clip-path: polygon(0 25px, 21px 0, 100% 0, 100% 100%, 0 100%);
}
.tab-active > * { position: relative; }
.tab-active .tab-label { font-size: 14px; }
.tab-label { display: flex; align-items: center; gap: 3px; white-space: nowrap; }
.tab-label svg { width: 18px; height: 20px; }
.tab-x svg { width: 14px; height: 14px; }

/* Work area */
.work { display: flex; flex: 1; min-height: 0; }

.modes, .orient {
  position: relative;
  display: flex;
  flex-direction: column;
  flex: none;
  width: 37px;
  padding-top: 10px;
  background: linear-gradient(90deg, #e4f2fb, #d5e8f4 60%, #bcd6e6);
}
.modes::before, .orient::before {
  content: "";
  position: absolute;
  left: 2px;
  right: 3px;
  top: 4px;
  border-top: 2px dotted #b0c4d2;
}
.modes button, .orient button { display: grid; place-items: center; flex: 0 1 31px; width: 32px; min-height: 0; margin-left: 1px; }
.modes svg, .orient svg { width: 26px; height: 26px; }
.modes .sep { flex: none; height: 4px; border-top: 1px solid #a9bfcd; }

.orient { align-self: flex-start; width: 36px; height: 160px; margin-left: 3px; }
.orient button { margin-left: 0; }
.orient input { flex: none; width: 35px; height: 19px; padding: 0 2px; border: 1px solid #333; border-right: 0; background: #fff; font: 12px/16px "Liberation Sans", sans-serif; }
.orient .sep { flex: none; height: 3px; margin-top: 3px; border-top: 1px solid #a9bfcd; }

.side { display: flex; flex-direction: column; flex: none; gap: 3px; width: 263px; padding-top: 1px; }
.overview { flex: none; height: 80px; border: 2px solid #8d979d; background: #e0e0d0; }
.overview svg { width: 100%; height: 76px; }
.picker { flex: 1; min-height: 0; border: 1px solid #2a6db0; background: #fff; }
.picker header { display: flex; align-items: center; height: 26px; padding: 0 2px; border-bottom: 1px solid #2a78c0; background: linear-gradient(#e8f3fa, #c8dfee); }
.picker h2 { flex: 1; padding-left: 6px; text-align: center; }
.pick { width: 18px; height: 18px; border-radius: 3px; background: #1450d8; color: #fff; font: 17px/18px "Noto Sans", sans-serif; }
.picker ul { list-style: none; }
.picker li button { display: block; width: 100%; height: 16px; padding-left: 2px; text-align: left; line-height: 16px; }
.picker .sel { background: #0078d7; color: #fff; }

.sheet { flex: 1; min-width: 0; margin: 1px 3px 0 3px; border: 1px solid #7f878c; background: #e0e0d0; overflow: hidden; }
.drawing { width: 100%; height: 100%; font-family: "Liberation Sans", sans-serif; }
.g-minor { stroke: #c5c6b8; }
.g-major { stroke: #b0b1a5; }
.wire, .live, .part, .led { fill: none; stroke-width: 3; }
.wire { stroke: #004000; }
.live { stroke: #fa0000; }
.part { stroke: #800008; }
.led { stroke: #900010; }
.body { fill: #c8c8a8; }
.mark { fill: none; stroke: #fa0505; stroke-width: 3; }
.pin { font-size: 15px; fill: #181810; }
.end { text-anchor: end; }
.ref { font-size: 23px; fill: #181810; }

/* Status bar */
.status { position: relative; display: flex; flex: none; height: 36px; padding-top: 3px; border-bottom: 2px solid #28506e; background: linear-gradient(#e9f4fb, #d3e8f4 50%, #b4d4e6); }
.sim, .root, .coords { position: relative; display: flex; align-items: center; }
.sim { width: 298px; padding-left: 15px; gap: 15px; border-right: 1px solid #b8ccd8; }
.sim svg { width: 26px; height: 26px; }
.sim .sep { width: 1px; height: 28px; margin: 0 -6px 0 -5px; background: #a9bfcd; }
.msgs { display: flex; align-items: center; gap: 4px; color: #858c91; white-space: nowrap; }
.root { width: 326px; margin-left: 3px; padding-left: 10px; border-right: 1px solid #b8ccd8; }
.coords { flex: 1; margin-left: 4px; }
.cx { margin-left: auto; margin-right: 375px; }
.cy { margin-right: 20px; }
.unit { color: #1818a8; }
.watermark { position: absolute; right: 23px; top: -10px; color: rgba(90, 95, 95, .7); font-size: 18px; line-height: 24px; }

/* Letters inside icons */
.glyph-code { font: bold 9px "Liberation Mono", monospace; fill: #1840d8; }
.glyph-code-s { font: bold 6px "Liberation Mono", monospace; fill: #1840d8; }
.glyph-dollar { font: bold 17px "Liberation Sans", sans-serif; fill: #7a7a10; text-anchor: middle; }
.glyph-help { font: bold 19px "Liberation Sans", sans-serif; fill: #fff; text-anchor: middle; }
.glyph-a { font: bold 14px "Liberation Sans", sans-serif; fill: #667068; }
.glyph-lbl { font: 12px "Noto Sans", sans-serif; fill: #2828a8; text-anchor: middle; }
.glyph-text { font: 30px "Liberation Serif", serif; fill: #111; text-anchor: middle; }
.glyph-text, .modes svg { overflow: visible; }
.glyph-s { font: bold 20px "DejaVu Sans", sans-serif; fill: #000; text-anchor: middle; }
.glyph-i { font: bold 20px "Liberation Serif", serif; fill: #fff; text-anchor: middle; }
```
